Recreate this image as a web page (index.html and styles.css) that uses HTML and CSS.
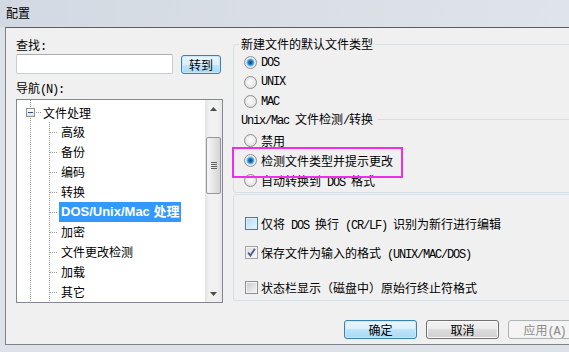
FILE: index.html
```html
<!DOCTYPE html>
<html lang="zh-CN">
<head>
  <meta charset="UTF-8" />
  <title>配置</title>
  <link rel="stylesheet" href="styles.css">
</head>
<body>
  <div class="titlebar">配置</div>

  <div class="window">
    <!-- 左侧：查找 + 导航树 -->
    <div class="left">
      <div class="lbl">查找<span class="m">:</span></div>
      <div class="find">
        <input class="search" />
        <button class="btn def go">转到</button>
      </div>
      <div class="lbl nav">导航<span class="m">(N):</span></div>

      <div class="tree">
        <div class="tree-body">
          <div class="node">
            <span class="toggle"></span><span class="hd root-hd"></span><span class="root-t">文件处理</span>
          </div>
          <ul class="kids">
            <li><span class="hd"></span><span class="t">高级</span></li>
            <li><span class="hd"></span><span class="t">备份</span></li>
            <li><span class="hd"></span><span class="t">编码</span></li>
            <li><span class="hd"></span><span class="t">转换</span></li>
            <li class="sel"><span class="hd"></span><span class="t">DOS/Unix/Mac 处理</span></li>
            <li><span class="hd"></span><span class="t">加密</span></li>
            <li><span class="hd"></span><span class="t">文件更改检测</span></li>
            <li><span class="hd"></span><span class="t">加载</span></li>
            <li><span class="hd"></span><span class="t">其它</span></li>
          </ul>
        </div>
        <div class="sb">
          <div class="sb-btn"><svg width="7" height="4" viewBox="0 0 7 4"><polygon points="3.5,0 7,4 0,4" fill="#4d4d4d"/></svg></div>
          <div class="track"><div class="thumb"></div></div>
          <div class="sb-btn"><svg width="7" height="4" viewBox="0 0 7 4"><polygon points="0,0 7,0 3.5,4" fill="#4d4d4d"/></svg></div>
        </div>
      </div>
    </div>

    <!-- 右侧：选项 -->
    <div class="right">
      <fieldset class="g1">
        <legend>新建文件的默认文件类型</legend>
        <div class="opts">
          <div class="row r-half"><span class="radio on"></span><span class="m">DOS</span></div>
          <div class="row r-half"><span class="radio"></span><span class="m">UNIX</span></div>
          <div class="row r-half"><span class="radio"></span><span class="m">MAC</span></div>
        </div>
        <div class="sep"><span><span class="m">Unix/Mac </span>文件检测<span class="m">/</span>转换</span></div>
        <div class="opts2">
          <div class="row"><span class="radio"></span><span>禁用</span></div>
          <div class="row mark"><span class="radio on"></span><span>检测文件类型并提示更改</span></div>
          <div class="row"><span class="radio"></span><span>自动转换到<span class="m"> DOS </span>格式</span></div>
        </div>
      </fieldset>

      <fieldset class="g2">
        <div class="row c1"><span class="cb hot"></span><span>仅将<span class="m"> DOS </span>换行<span class="m"> (CR/LF) </span>识别为新行进行编辑</span></div>
        <div class="row c2"><span class="cb chk"><svg width="11" height="11" viewBox="0 0 11 11"><path d="M2.2 5.6 L4.4 8.6 L8.9 1.8" fill="none" stroke="#4a5c98" stroke-width="1.8"/></svg></span><span>保存文件为输入的格式<span class="m"> (UNIX/MAC/DOS)</span></span></div>
        <div class="row c3"><span class="cb"></span><span>状态栏显示（磁盘中）原始行终止符格式</span></div>
      </fieldset>

      <div class="actions">
        <button class="btn def">确定</button>
        <button class="btn">取消</button>
        <button class="btn off">应用<span class="m">(A)</span></button>
      </div>
    </div>
  </div>
</body>
</html>
```

FILE: styles.css
```css
* {
  box-sizing: border-box;
}
body {
  margin: 0;
  height: 352px;
  overflow: hidden;
  background: #dde2e9;
  font: 12px "Noto Sans CJK SC", sans-serif;
  color: #000;
}
.m {
  font-family: "Liberation Mono", monospace;
  font-size: 12px;
  letter-spacing: -1.2px;
}

/* 标题栏 */
.titlebar {
  height: 27px;
  line-height: 26px;
  padding-left: 6px;
  background: linear-gradient(100deg, #d3d9e2, #dfe4ea);
}

.window {
  display: flex;
  width: 564px;
  height: 318px;
  margin-left: 5px;
  padding: 9px 0 0 10px;
  overflow: hidden;
  background: #f0f0f0;
  border: 1px solid #7f8389;
  border-top-color: #5a5e63;
  border-right: none;
}

/* 左侧 */
.left {
  width: 207px;
  flex: none;
}
.lbl {
  height: 16px;
  line-height: 16px;
}
.nav {
  margin-top: 6px;
}
.find {
  display: flex;
  margin-top: 1px;
}
.search {
  width: 157px;
  height: 20px;
  margin: 0;
  padding: 0;
  border: 1px solid #c7ccd3;
  border-top-color: #abadb3;
  border-radius: 2px;
  background: #fff;
}
.go {
  width: 40px;
  margin: 1px 0 0 8px;
}

.tree {
  display: flex;
  width: 207px;
  height: 204px;
  margin-top: 3px;
  border: 1px solid #828790;
  background: #fff;
}
.tree-body {
  flex: 1;
  overflow: hidden;
  padding-top: 2px;
  background: repeating-linear-gradient(to bottom, #9a9a9a 0 1px, transparent 1px 2px) 13px 0 / 1px 100% no-repeat;
}
.node {
  display: flex;
  align-items: center;
  height: 20px;
}
.toggle {
  width: 9px;
  height: 9px;
  margin-left: 9px;
  border: 1px solid #919191;
  background: linear-gradient(#2e4d86, #2e4d86) center / 5px 1px no-repeat, linear-gradient(#fff, #e2e2e2);
}
.hd {
  display: inline-block;
  width: 8px;
  height: 1px;
  background: repeating-linear-gradient(to right, #9a9a9a 0 1px, transparent 1px 2px);
}
.root-hd {
  width: 5px;
  margin-left: 1px;
}
.root-t {
  margin-left: 2px;
}
.kids {
  list-style: none;
  margin: 0;
  padding: 0;
}
.kids li {
  display: flex;
  align-items: center;
  height: 20px;
  padding-left: 33px;
  background: repeating-linear-gradient(to bottom, #9a9a9a 0 1px, transparent 1px 2px) 32px 0 / 1px 100% no-repeat;
}
.kids .t {
  margin-left: 1px;
  padding: 0 2px;
  line-height: 20px;
}
.kids .sel .t {
  background: #3399ff;
  color: #fff;
  font: bold 13px "Liberation Sans", "Noto Sans CJK SC", sans-serif;
  line-height: 20px;
}

.sb {
  width: 17px;
  flex: none;
  display: flex;
  flex-direction: column;
  background: linear-gradient(to right, #e3e3e3, #f1f1f1 25%, #f1f1f1 75%, #e6e6e6);
}
.sb-btn {
  height: 17px;
  display: flex;
  align-items: center;
  justify-content: center;
}
.track {
  flex: 1;
}
.thumb {
  height: 57px;
  margin: 20px 1px 0;
  border: 1px solid #979797;
  border-radius: 2px;
  background: repeating-linear-gradient(to bottom, #606060 0 1px, transparent 1px 2px) center / 6px 7px no-repeat,
              linear-gradient(to right, #f5f5f5, #e6e6e6 50%, #d4d4d4);
}

/* 右侧 */
.right {
  width: 348px;
  flex: none;
  margin-left: 10px;
}
fieldset {
  margin: 0;
  padding: 0 0 0 10px;
  border: 1px solid #d5dfe5;
  border-radius: 3px;
}
legend {
  margin-left: -5px;
  padding: 0 2px;
  line-height: 14px;
}
.row {
  display: flex;
  align-items: center;
  height: 20px;
}
.row > span:last-child {
  margin-left: 4px;
}
.opts {
  padding-top: 2px;
}
.r-half {
  height: 19.5px;
}
.sep {
  display: flex;
  align-items: center;
  height: 14px;
  margin: 1px 0 0 -3px;
  line-height: 14px;
}
.sep::after {
  content: "";
  flex: 1;
  margin-left: 4px;
  border-top: 1px solid #d5dfe5;
}
.opts2 {
  margin-top: 4px;
  padding-bottom: 1px;
}
.mark {
  position: relative;
}
.mark::after {
  content: "";
  position: absolute;
  left: -12px;
  top: -4px;
  width: 167px;
  height: 27px;
  border: 2px solid #ee2eea;
}

.radio {
  width: 13px;
  height: 13px;
  flex: none;
  border: 1px solid #8e8f8f;
  border-radius: 50%;
  background: radial-gradient(circle at 50% 45%, #ffffff 0, #f2f2f2 35%, #d4d4d4 100%);
}
.radio.on {
  background: radial-gradient(circle at 50% 50%, #0f3f70 0, #1a68ad 1.5px, #318fd6 2.6px, #7cc4f0 3.6px, #d4eaf8 4.3px, #f0f0f0 4.8px, #d2d2d2 100%);
}

.g2 {
  margin-top: 1px;
  padding-top: 19px;
  padding-bottom: 2px;
}
.cb {
  display: inline-flex;
  align-items: center;
  justify-content: center;
  width: 13px;
  height: 13px;
  flex: none;
  margin-left: 1px;
  border: 1px solid #8f8f8f;
  background: linear-gradient(135deg, #c6cacf, #f6f6f6);
  box-shadow: inset 0 0 0 1px #f4f4f4;
}
.cb.hot {
  border-color: #3c7fb1;
  background: linear-gradient(135deg, #b4d9f2, #eaf6fd);
  box-shadow: inset 0 0 0 1px #def0fb;
}
.cb.chk {
  border-color: #a3a3a3;
  background: linear-gradient(135deg, #dcdcdc, #f8f8f8);
}
.row.c1 > span:last-child,
.row.c2 > span:last-child,
.row.c3 > span:last-child {
  margin-left: 3px;
}
.c2 {
  margin-top: 9px;
}
.c3 {
  margin-top: 15px;
}

/* 按钮 */
.btn {
  height: 19px;
  padding: 0;
  font: inherit;
  line-height: 17px;
  color: #000;
  border: 1px solid #707070;
  border-radius: 3px;
  background: linear-gradient(#f2f2f2 0, #ebebeb 50%, #dddddd 50%, #cfcfcf 100%);
  box-shadow: inset 0 0 0 1px #fbfbfb;
}
.btn.def {
  border-color: #3c7fb1;
  background: linear-gradient(#e9f5fc 0, #d9f0fc 50%, #bde5fc 50%, #a9d9f3 100%);
  box-shadow: inset 0 0 0 1px #c9e9fa;
}
.btn.off {
  color: #8a8a8a;
  border-color: #adb2b5;
  background: #f4f4f4;
  box-shadow: none;
}
.actions {
  display: flex;
  justify-content: flex-end;
  gap: 9px;
  margin-top: 19px;
}
.actions .btn {
  width: 73px;
}
```
